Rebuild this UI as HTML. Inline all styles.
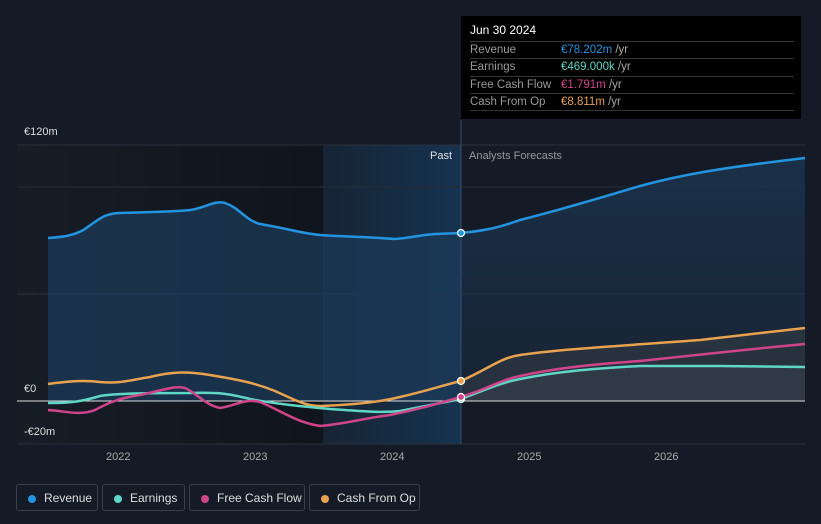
<!DOCTYPE html>
<html><head><meta charset="utf-8"><style>
body{margin:0;width:821px;height:524px;background:#151b26;font-family:"Liberation Sans",sans-serif;overflow:hidden;position:relative}
.tt{position:absolute;left:461px;top:16px;width:340px;height:103px;background:#000;color:#fff;font-size:11.5px}
.tt .h{position:absolute;left:9px;top:7px;font-size:12px}
.row{position:absolute;left:9px;width:324px;height:17px;border-top:1px solid #333;line-height:17px;color:#999}
.row span{position:absolute;left:91px}
.row i{font-style:normal;color:#aaa}
.lg{position:absolute;top:484px;height:27px;border:1px solid #3a404b;border-radius:3px;color:#ddd;font-size:12px;line-height:27px;box-sizing:border-box}
.lg b{position:absolute;left:11px;top:10px;width:8px;height:8px;border-radius:50%}
.lg span{position:absolute;left:27px}
.ax{position:absolute;color:#ddd;font-size:11px}
</style></head><body>
<svg width="821" height="524" style="position:absolute;left:0;top:0">
<defs>
<linearGradient id="lg0" x1="0" x2="1"><stop offset="0" stop-color="#171c26"/><stop offset="1" stop-color="#10141c"/></linearGradient>
<linearGradient id="pg" x1="0" x2="1"><stop offset="0" stop-color="#172434"/><stop offset="1" stop-color="#163350"/></linearGradient>
<linearGradient id="fg" x1="0" x2="0" y1="0" y2="1"><stop offset="0" stop-color="#1b3550" stop-opacity="0.8"/><stop offset="1" stop-color="#1b3550" stop-opacity="0.3"/></linearGradient>
</defs>
<rect x="17" y="145" width="306" height="299" fill="url(#lg0)"/>
<rect x="323" y="145" width="138" height="299" fill="url(#pg)"/>
<line x1="17" y1="145" x2="805" y2="145" stroke="#2b313c"/>
<line x1="17" y1="187" x2="805" y2="187" stroke="#262c37"/>
<line x1="17" y1="294" x2="805" y2="294" stroke="#2b313c"/>
<line x1="17" y1="444" x2="805" y2="444" stroke="#2b313c"/>
<path d="M48,238 C65,237 75,235 85,229 C100,218 105,214 118,213 C150,212 170,212 190,210 C205,208 215,200 225,203 C240,208 245,220 260,224 C290,229 300,233 320,235 C350,237 370,237 395,239 C410,238 420,235 435,234 L461,233 L461,401 L48,401Z" fill="#1c3a58" fill-opacity="0.75"/>
<path d="M461,233 C490,230 500,227 520,220 C560,210 600,198 640,186 C680,175 720,168 805,158 L805,401 L461,401Z" fill="url(#fg)"/>
<path d="M461,381 C490,368 500,358 520,355 C560,349 620,346 700,340 L805,328 L805,367 L720,366 L640,366 C600,368 560,371 520,379 C490,388 475,395 461,399Z" fill="#3a3f48" fill-opacity="0.5"/>
<path d="M461,399 C490,388 500,383 520,379 C560,371 600,368 640,366 L720,366 L805,367 L805,401 L461,401Z" fill="#4a4f58" fill-opacity="0.5"/>
<line x1="461" y1="120" x2="461" y2="444" stroke="#35516e"/>
<line x1="17" y1="401" x2="805" y2="401" stroke="#ddd" stroke-width="1"/>
<path d="M48,238 C65,237 75,235 85,229 C100,218 105,214 118,213 C150,212 170,212 190,210 C205,208 215,200 225,203 C240,208 245,220 260,224 C290,229 300,233 320,235 C350,237 370,237 395,239 C410,238 420,235 435,234 L461,233 C490,230 500,227 520,220 C560,210 600,198 640,186 C680,175 720,168 805,158" fill="none" stroke="#2394df" stroke-width="2.5"/>
<path d="M48,384 C70,381 85,380 100,382 C120,384 130,380 150,377 C170,372 185,371 210,375 C240,380 255,383 275,391 C295,400 305,406 320,406 C350,405 380,402 400,397 C430,390 440,386 461,381 C490,368 500,358 520,355 C560,349 620,346 700,340 L805,328" fill="none" stroke="#e8a24f" stroke-width="2.5"/>
<path d="M48,403 C70,403 80,402 100,396 C118,393 160,393 190,393 C220,392 230,394 250,399 C280,405 310,407 330,409 C360,411 380,413 400,411 C430,405 445,402 461,399 C490,388 500,383 520,379 C560,371 600,368 640,366 L720,366 L805,367" fill="none" stroke="#5fd6c6" stroke-width="2.5"/>
<path d="M48,410 C65,411 80,416 95,410 C110,402 120,398 140,395 C160,391 175,385 185,388 C195,392 205,405 220,408 C235,406 245,398 260,402 C280,410 295,422 320,426 C345,424 360,419 390,415 C420,409 440,403 461,397 C490,388 500,380 520,376 C560,367 600,364 640,361 C680,357 720,352 805,344" fill="none" stroke="#d0458a" stroke-width="2.5"/>
<circle cx="461" cy="233" r="3.5" fill="#2394df" stroke="#fff" stroke-width="1.2"/>
<circle cx="461" cy="381" r="3.5" fill="#e8a24f" stroke="#fff" stroke-width="1.2"/>
<circle cx="461" cy="399" r="3.5" fill="#5fd6c6" stroke="#fff" stroke-width="1.2"/>
<circle cx="461" cy="397" r="3.5" fill="#d0458a" stroke="#fff" stroke-width="1.2"/>
</svg>
<div class="ax" style="left:24px;top:126px">€120m</div>
<div class="ax" style="left:24px;top:383px">€0</div>
<div class="ax" style="left:24px;top:426px">-€20m</div>
<div class="ax" style="left:430px;top:150px">Past</div>
<div class="ax" style="left:469px;top:150px;color:#999">Analysts Forecasts</div>
<div class="ax" style="left:106px;top:451px;color:#aaa">2022</div>
<div class="ax" style="left:243px;top:451px;color:#aaa">2023</div>
<div class="ax" style="left:380px;top:451px;color:#aaa">2024</div>
<div class="ax" style="left:517px;top:451px;color:#aaa">2025</div>
<div class="ax" style="left:654px;top:451px;color:#aaa">2026</div>
<div class="tt"><div class="h">Jun 30 2024</div>
<div class="row" style="top:25px">Revenue<span><b style="font-weight:normal;color:#2394df">€78.202m</b> <i>/yr</i></span></div>
<div class="row" style="top:42px">Earnings<span><b style="font-weight:normal;color:#5fd6c6">€469.000k</b> <i>/yr</i></span></div>
<div class="row" style="top:60px">Free Cash Flow<span><b style="font-weight:normal;color:#d0458a">€1.791m</b> <i>/yr</i></span></div>
<div class="row" style="top:77px">Cash From Op<span><b style="font-weight:normal;color:#e8a24f">€8.811m</b> <i>/yr</i></span></div>
<div class="row" style="top:94px;height:0"></div>
</div>
<div class="lg" style="left:16px;width:82px"><b style="background:#2394df"></b><span>Revenue</span></div>
<div class="lg" style="left:102px;width:83px"><b style="background:#5fd6c6"></b><span>Earnings</span></div>
<div class="lg" style="left:189px;width:116px"><b style="background:#d0458a"></b><span>Free Cash Flow</span></div>
<div class="lg" style="left:309px;width:111px"><b style="background:#e8a24f"></b><span>Cash From Op</span></div>
</body></html>
